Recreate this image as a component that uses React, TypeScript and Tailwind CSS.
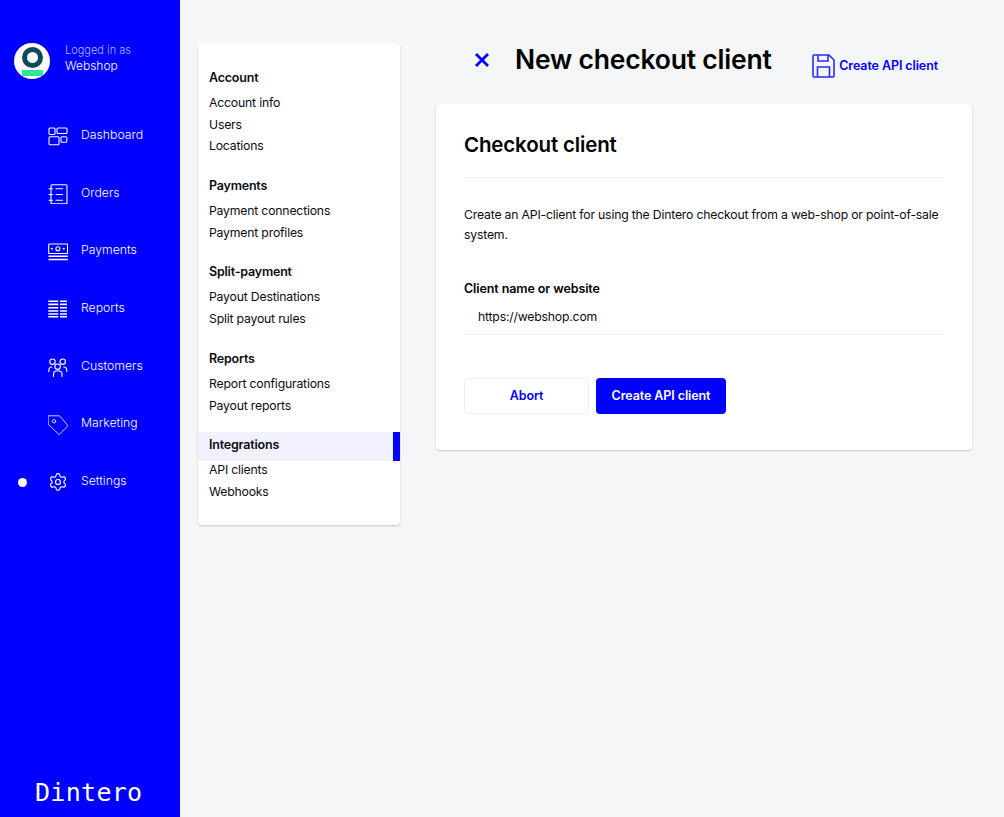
import React from "react";
import { Settings } from "lucide-react";

const Ico = ({ children }: { children: React.ReactNode }) => (
  <svg width="20" height="20" viewBox="0 0 20 20" fill="none" stroke="white" strokeWidth="1.100" strokeLinecap="round" strokeLinejoin="round" className="shrink-0">
    {children}
  </svg>
);

const nav: { label: string; icon: React.ReactNode; active?: boolean }[] = [
  {
    label: "Dashboard",
    icon: (
      <>
        <rect x="1" y="2" width="6" height="6.500" rx="1" />
        <rect x="9" y="2" width="10" height="5.500" rx="1" />
        <rect x="1" y="10.700" width="10" height="8" rx="1" />
        <rect x="13" y="10.700" width="5.800" height="5.500" rx="1" />
      </>
    ),
  },
  {
    label: "Orders",
    icon: (
      <>
        <rect x="3" y="0.700" width="16" height="19" rx="1" />
        <path d="M1 4.800h3.500M1 10.500h3.500M1 16.300h3.500M8 4.800h6.500M8 10.500h6.500M8 16.300h6.500" />
      </>
    ),
  },
  {
    label: "Payments",
    icon: (
      <>
        <rect x="0.700" y="2" width="18.800" height="9.500" rx="0.500" />
        <circle cx="9.900" cy="6.800" r="2" />
        <path d="M3.500 6.800h.8M15.300 6.800h.8" strokeWidth="1.500" />
        <path d="M0.500 14.200h19.300M0.500 17.500h19.300" strokeLinecap="butt" strokeWidth="1.400" />
      </>
    ),
  },
  {
    label: "Reports",
    icon: (
      <path
        d="M0.300 2.300h10M0.300 5.400h10M0.300 8.800h10M0.300 12h10M0.300 15h10M0.300 17.800h10M12 2.300h7M12 5.400h7M12 8.800h7M12 12h7M12 15h7M12 17.800h7"
        strokeWidth="1.600"
        strokeLinecap="butt"
      />
    ),
  },
  {
    label: "Customers",
    icon: (
      <>
        <circle cx="4.500" cy="4.700" r="2.700" />
        <circle cx="14.700" cy="4.700" r="2.700" />
        <circle cx="9.600" cy="9.700" r="2.700" />
        <path d="M0.800 14.500v-1.500a3 3 0 0 1 3-3M18.700 14.500v-1.500a3 3 0 0 0-3-3M5.500 19.500v-2.500a3 3 0 0 1 3-3h2.500a3 3 0 0 1 3 3v2.500" />
      </>
    ),
  },
  {
    label: "Marketing",
    icon: (
      <>
        <path d="M0.500 0.800h11L20 10.800l-8.800 8.800L0.500 9.500z" strokeWidth="0.800" />
        <circle cx="6" cy="6.300" r="1.700" strokeWidth="0.800" />
      </>
    ),
  },
  {
    label: "Settings",
    active: true,
    icon: null,
  },
];

const sections = [
  { title: "Account", items: ["Account info", "Users", "Locations"], h: "h-[108px]" },
  { title: "Payments", items: ["Payment connections", "Payment profiles"], h: "h-[86px]" },
  { title: "Split-payment", items: ["Payout Destinations", "Split payout rules"], h: "h-[87px]" },
  { title: "Reports", items: ["Report configurations", "Payout reports"], h: "h-[83px]" },
];

export default function App() {
  return (
    <div className="flex h-[817px] overflow-hidden bg-[#f5f6f8] text-[12.250px] tracking-[-0.2px] text-[#0b0b14] font-['Inter','Liberation_Sans',sans-serif]">
      <aside className="w-[180px] shrink-0 bg-[#0000ff] text-white flex flex-col tracking-normal">
        <div className="flex items-start gap-[15px] pl-[14px] pt-[43px]">
          <div className="w-[36px] h-[36px] rounded-full bg-white flex flex-col items-center pt-[4px] overflow-hidden">
            <div className="w-[21px] h-[21px] rounded-full border-[5.500px] border-[#0e4a5e]" />
            <div className="w-[21px] h-[6px] mt-[2px] bg-[#2ee59d]" />
          </div>
          <div className="leading-[15px]">
            <div className="text-[11px] font-light text-[#b4b4ff]">Logged in as</div>
            <div className="text-[12px] font-light">Webshop</div>
          </div>
        </div>
        <nav className="mt-[28.400px] flex flex-col">
          {nav.map((n) => (
            <div key={n.label} className="relative h-[57.670px] flex items-center pl-[48px] gap-[13px]">
              {n.active && <span className="absolute left-[18px] top-[25px] w-[9px] h-[9px] rounded-full bg-white" />}
              {n.icon ? <Ico>{n.icon}</Ico> : <Settings size={20} color="white" strokeWidth={1.4} className="shrink-0" />}
              <span className="text-[12.250px] font-light pb-[2px]">{n.label}</span>
            </div>
          ))}
        </nav>
        <div className="mt-auto pl-[35px] pb-[7px] text-[25px] leading-[34px] tracking-[0.300px] font-['DejaVu_Sans_Mono',monospace]">
          Dintero
        </div>
      </aside>

      <div className="w-[202px] ml-[18px] mt-[43px] h-[482px] bg-white rounded-[4px] shadow-[0_1px_2px_rgba(0,0,0,0.2)] shrink-0 pt-[25px]">
        {sections.map((s) => (
          <div key={s.title} className={`${s.h} pl-[11px]`}>
            <div className="font-semibold h-[25px] leading-[20px] text-[12.500px]">{s.title}</div>
            {s.items.map((i) => (
              <div key={i} className="h-[21.500px] leading-[20px]">{i}</div>
            ))}
          </div>
        ))}
        <div className="relative h-[29px] bg-[#f1f1fd] pl-[11px] flex items-center font-semibold text-[12.500px]">
          <span className="pb-[3px]">Integrations</span>
          <span className="absolute right-0 top-0 w-[7px] h-[29px] bg-[#0000ff]" />
        </div>
        <div className="pl-[11px]">
          <div className="h-[21.500px] leading-[20px] mt-[-1px]">API clients</div>
          <div className="h-[21.500px] leading-[20px]">Webhooks</div>
        </div>
      </div>

      <main className="ml-[36px] w-[536px] shrink-0 pt-[43px]">
        <header className="h-[61px] flex items-start">
          <svg width="16" height="16" viewBox="0 0 16 16" className="ml-[38px] mt-[9px]" stroke="#0000ff" strokeWidth="2.800" fill="none">
            <path d="M2 2l12 12M14 2L2 14" />
          </svg>
          <h1 className="ml-[25px] mt-[-1px] text-[26.500px] leading-[34px] font-semibold text-black">New checkout client</h1>
          <div className="ml-auto mr-[34px] mt-[11px] flex items-center gap-[4px] text-[#0000ff] font-semibold text-[12.500px] tracking-[-0.1px]">
            <svg width="23" height="24" viewBox="0 0 23 24" fill="none" stroke="#2a2aff" strokeWidth="1.600">
              <path d="M2 1h15l5 5v16a1 1 0 0 1-1 1H2a1 1 0 0 1-1-1V2a1 1 0 0 1 1-1z" />
              <path d="M6 1v6h10V1M5.500 23V13h12v10" />
            </svg>
            <span>Create API client</span>
          </div>
        </header>

        <section className="bg-white rounded-[4px] shadow-[0_1px_2px_rgba(0,0,0,0.2)] h-[346px] pl-[28px] pr-[29px] pt-[26px]">
          <h2 className="text-[20.500px] leading-[30px] font-semibold tracking-[-0.15px] text-black">Checkout client</h2>
          <div className="mt-[17px] border-t border-[#eeeeee]" />
          <p className="mt-[27px] leading-[20px]">
            Create an API-client for using the Dintero checkout from a web-shop or point-of-sale system.
          </p>
          <label className="block mt-[34px] font-semibold leading-[20px] text-[12.500px] tracking-[-0.1px] text-black">Client name or website</label>
          <div className="mt-[5px] h-[31px] pl-[14px] pt-[3px] leading-[20px] border-b border-[#eeeeee]">https://webshop.com</div>
          <div className="mt-[43px] flex gap-[7px] text-[12.500px] tracking-[-0.1px]">
            <button className="w-[125px] h-[36px] rounded-[4px] border border-[#eeeeee] bg-white text-[#0000ff] font-semibold">Abort</button>
            <button className="w-[130px] h-[36px] rounded-[4px] bg-[#0000ff] text-white font-semibold">Create API client</button>
          </div>
        </section>
      </main>
    </div>
  );
}
